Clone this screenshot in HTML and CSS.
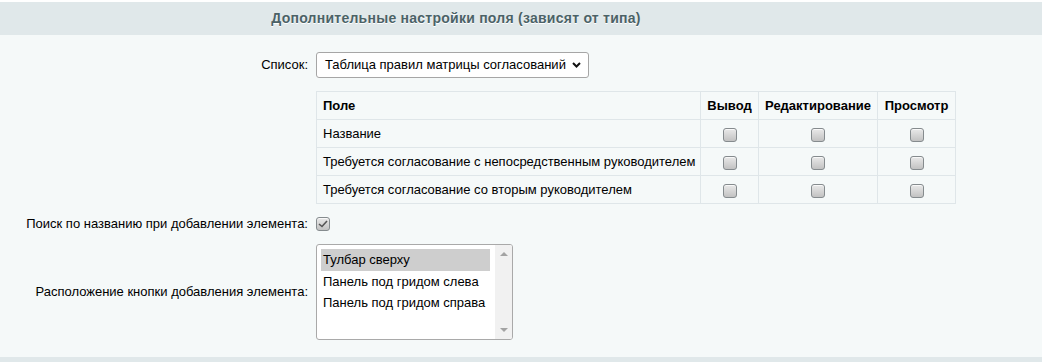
FILE: index.html
```html
<!DOCTYPE html>
<html lang="ru">
<head>
<meta charset="utf-8">
<title>Дополнительные настройки поля</title>
<link rel="stylesheet" href="styles.css">
</head>
<body>
<div class="page">
  <div class="heading">Дополнительные настройки поля (зависят от типа)</div>
  <div class="content">
    <div class="label">Список:</div>
    <div class="field">
      <div class="select">
        <span>Таблица правил матрицы согласований</span>
        <svg class="chev" width="9" height="6" viewBox="0 0 9 6"><path d="M1 1 L4.5 4.5 L8 1" fill="none" stroke="#111" stroke-width="2"/></svg>
      </div>
    </div>

    <div class="label"></div>
    <div class="field">
      <table class="perm">
        <colgroup><col class="c1"><col class="c2"><col class="c3"><col class="c4"></colgroup>
        <tr><th class="name">Поле</th><th>Вывод</th><th>Редактирование</th><th>Просмотр</th></tr>
        <tr><td class="name">Название</td><td><span class="cb"></span></td><td><span class="cb"></span></td><td><span class="cb"></span></td></tr>
        <tr><td class="name">Требуется согласование с непосредственным руководителем</td><td><span class="cb"></span></td><td><span class="cb"></span></td><td><span class="cb"></span></td></tr>
        <tr><td class="name">Требуется согласование со вторым руководителем</td><td><span class="cb"></span></td><td><span class="cb"></span></td><td><span class="cb"></span></td></tr>
      </table>
    </div>

    <div class="label">Поиск по названию при добавлении элемента:</div>
    <div class="field">
      <span class="cb checked"><svg width="10" height="8" viewBox="0 0 10 8"><path d="M1 4 L4 6.5 L9 1" fill="none" stroke="#555" stroke-width="1.6"/></svg></span>
    </div>

    <div class="label">Расположение кнопки добавления элемента:</div>
    <div class="field">
      <div class="listbox">
        <div class="opts">
          <div class="opt selected">Тулбар сверху</div>
          <div class="opt">Панель под гридом слева</div>
          <div class="opt">Панель под гридом справа</div>
        </div>
        <div class="scroll">
          <span class="arr up"></span>
          <span class="arr down"></span>
        </div>
      </div>
    </div>
  </div>
  <div class="footer"></div>
</div>
</body>
</html>
```
FILE: styles.css
```css
* { box-sizing: border-box; }
html, body { margin: 0; padding: 0; }
body {
  background: #ffffff;
  font-family: "Liberation Sans", Arial, sans-serif;
  font-size: 13px;
  color: #000;
}
.page {
  margin-top: 2px;
  background: #f5f9f9;
}
.heading {
  background: #e0e8ea;
  color: #4b6267;
  font-weight: bold;
  font-size: 14px;
  letter-spacing: 0.25px;
  text-align: center;
  height: 33px;
  line-height: 33px;
  padding-right: 130px;
  text-shadow: 0 1px #fff;
}
.content {
  display: grid;
  grid-template-columns: 308px 1fr;
  column-gap: 8px;
  row-gap: 13px;
  align-items: center;
  padding: 17px 0 17px;
}
.label {
  text-align: right;
  color: #000;
  line-height: 14px;
}
.field { display: flex; align-items: center; line-height: 14px; }
.select {
  width: 273px;
  height: 26px;
  border: 1px solid #a6a6a6;
  border-radius: 3px;
  background: #fff;
  display: flex;
  align-items: center;
  justify-content: space-between;
  padding: 0 7px 0 8px;
}
.chev { display: block; }
.perm {
  border-collapse: collapse;
  width: 639px;
  table-layout: fixed;
}
.perm col.c1 { width: 384px; }
.perm col.c2 { width: 58px; }
.perm col.c3 { width: 119px; }
.perm col.c4 { width: 78px; }
.perm th, .perm td {
  border: 1px solid #dfe6e9;
  height: 28px;
  padding: 0 6px;
  text-align: center;
  vertical-align: middle;
  white-space: nowrap;
}
.perm th { font-weight: bold; }
.perm .name { text-align: left; }
.cb {
  display: inline-flex;
  align-items: center;
  justify-content: center;
  width: 14px;
  height: 14px;
  border: 1px solid #858b8e;
  border-radius: 3px;
  background: linear-gradient(#e9e9e9, #c2c2c2);
  box-shadow: inset 0 1px 0 rgba(255,255,255,0.7);
  vertical-align: middle;
}
.perm .cb { margin-top: 2px; }
.listbox {
  width: 197px;
  height: 96px;
  border: 1px solid #a9a9a9;
  border-radius: 3px;
  background: #fff;
  display: flex;
  overflow: hidden;
}
.opts {
  flex: 1;
  padding: 4px 5px 4px 4px;
}
.opt {
  height: 21px;
  line-height: 21px;
  padding-left: 2px;
}
.opt.selected { background: #cecece; height: 22px; line-height: 22px; }
.scroll {
  width: 17px;
  background: #f1f1f1;
  display: flex;
  flex-direction: column;
  justify-content: space-between;
  align-items: center;
  padding: 7px 0 7px;
}
.arr {
  width: 0; height: 0;
  border-left: 4px solid transparent;
  border-right: 4px solid transparent;
}
.arr.up { border-bottom: 4px solid #a3a3a3; }
.arr.down { border-top: 4px solid #a3a3a3; }
.footer {
  background: #e0e8ea;
  height: 10px;
}
```
